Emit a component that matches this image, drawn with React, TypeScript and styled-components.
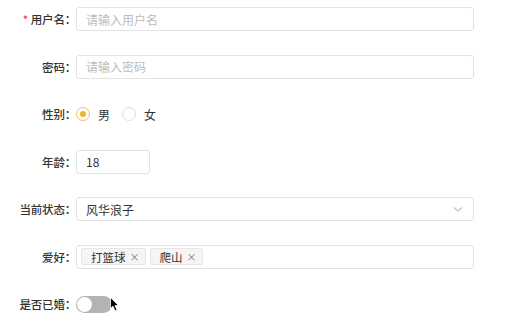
import React from "react";
import styled, { createGlobalStyle } from "styled-components";

const Global = createGlobalStyle`
  body {
    margin: 0;
    background: #fff;
    font-family: "Noto Sans CJK SC", "Liberation Sans", sans-serif;
    color: #333;
  }
`;

const Form = styled.div`
  width: 517px;
  padding-top: 7px;
  display: flex;
  flex-direction: column;
  gap: 23.5px;
`;

const Row = styled.div`
  display: flex;
  align-items: center;
  height: 24px;
  flex: none;
`;

const Label = styled.label`
  width: 76px;
  flex: none;
  text-align: right;
  font-size: 11.5px;
  font-weight: 500;
  color: #333;
  white-space: nowrap;
  letter-spacing: -0.2px;
`;

const Star = styled.span`
  color: #e0443a;
  margin-right: 3px;
  font-size: 11px;
`;

const Box = styled.div<{ $w?: number }>`
  box-sizing: border-box;
  width: ${(p) => p.$w ?? 398}px;
  height: 24px;
  border: 1px solid #e3e3e3;
  border-radius: 3px;
  display: flex;
  align-items: center;
  padding: 0 9px;
  font-size: 12px;
  color: #333;
  position: relative;
`;

const Placeholder = styled.span`
  color: #bcbcbc;
`;

const Chevron = styled.svg`
  position: absolute;
  right: 10px;
  top: 8px;
`;

const Radios = styled.div`
  display: flex;
  align-items: center;
  gap: 12px;
`;

const RadioItem = styled.span`
  display: flex;
  align-items: center;
  gap: 8px;
  font-size: 12px;
  color: #333;
`;

const Circle = styled.span<{ $on?: boolean }>`
  box-sizing: border-box;
  width: 14px;
  height: 14px;
  border-radius: 50%;
  border: 1px solid ${(p) => (p.$on ? "#efc35c" : "#dedede")};
  display: flex;
  align-items: center;
  justify-content: center;
  &::after {
    content: "";
    width: 6px;
    height: 6px;
    border-radius: 50%;
    background: ${(p) => (p.$on ? "#eeb530" : "transparent")};
  }
`;

const TagBox = styled(Box)`
  padding: 0 4px;
  gap: 4px;
`;

const Tag = styled.span`
  box-sizing: border-box;
  height: 17px;
  display: flex;
  align-items: center;
  gap: 4px;
  padding: 0 5px 0 9px;
  background: #f5f5f5;
  border: 1px solid #e6e6e6;
  border-radius: 2px;
  font-size: 11.5px;
  color: #333;
`;

const Close = styled.span`
  font-size: 10px;
  color: #777;
`;

const SwitchWrap = styled.div`
  position: relative;
  height: 17px;
`;

const Track = styled.span`
  box-sizing: border-box;
  display: flex;
  align-items: center;
  width: 36px;
  height: 17px;
  border-radius: 9px;
  background: #b3b3b3;
  padding: 1px;
  &::before {
    content: "";
    width: 15px;
    height: 15px;
    border-radius: 50%;
    background: #fff;
  }
`;

const Cursor = styled.svg`
  position: absolute;
  left: 34px;
  top: 1px;
`;

export default function App() {
  return (
    <>
      <Global />
      <Form>
        <Row>
          <Label>
            <Star>*</Star>用户名：
          </Label>
          <Box>
            <Placeholder>请输入用户名</Placeholder>
          </Box>
        </Row>
        <Row>
          <Label>密码：</Label>
          <Box>
            <Placeholder>请输入密码</Placeholder>
          </Box>
        </Row>
        <Row>
          <Label>性别：</Label>
          <Radios>
            <RadioItem>
              <Circle $on />男
            </RadioItem>
            <RadioItem>
              <Circle />女
            </RadioItem>
          </Radios>
        </Row>
        <Row>
          <Label>年龄：</Label>
          <Box $w={74}>18</Box>
        </Row>
        <Row>
          <Label>当前状态：</Label>
          <Box>
            风华浪子
            <Chevron width="10" height="7" viewBox="0 0 10 7">
              <path d="M1 1.5 L5 5 L9 1.5" fill="none" stroke="#c4c4c4" strokeWidth="1.2" />
            </Chevron>
          </Box>
        </Row>
        <Row>
          <Label>爱好：</Label>
          <TagBox>
            <Tag>
              打篮球<Close>×</Close>
            </Tag>
            <Tag>
              爬山<Close>×</Close>
            </Tag>
          </TagBox>
        </Row>
        <Row>
          <Label>是否已婚：</Label>
          <SwitchWrap>
            <Track />
            <Cursor width="10" height="15" viewBox="0 0 10 15">
              <path d="M0.5 0.5 L0.5 11.5 L3 9.2 L5 13.8 L7 12.9 L5 8.5 L8.5 8.5 Z" fill="#000" stroke="#fff" strokeWidth="0.8" />
            </Cursor>
          </SwitchWrap>
        </Row>
      </Form>
    </>
  );
}
